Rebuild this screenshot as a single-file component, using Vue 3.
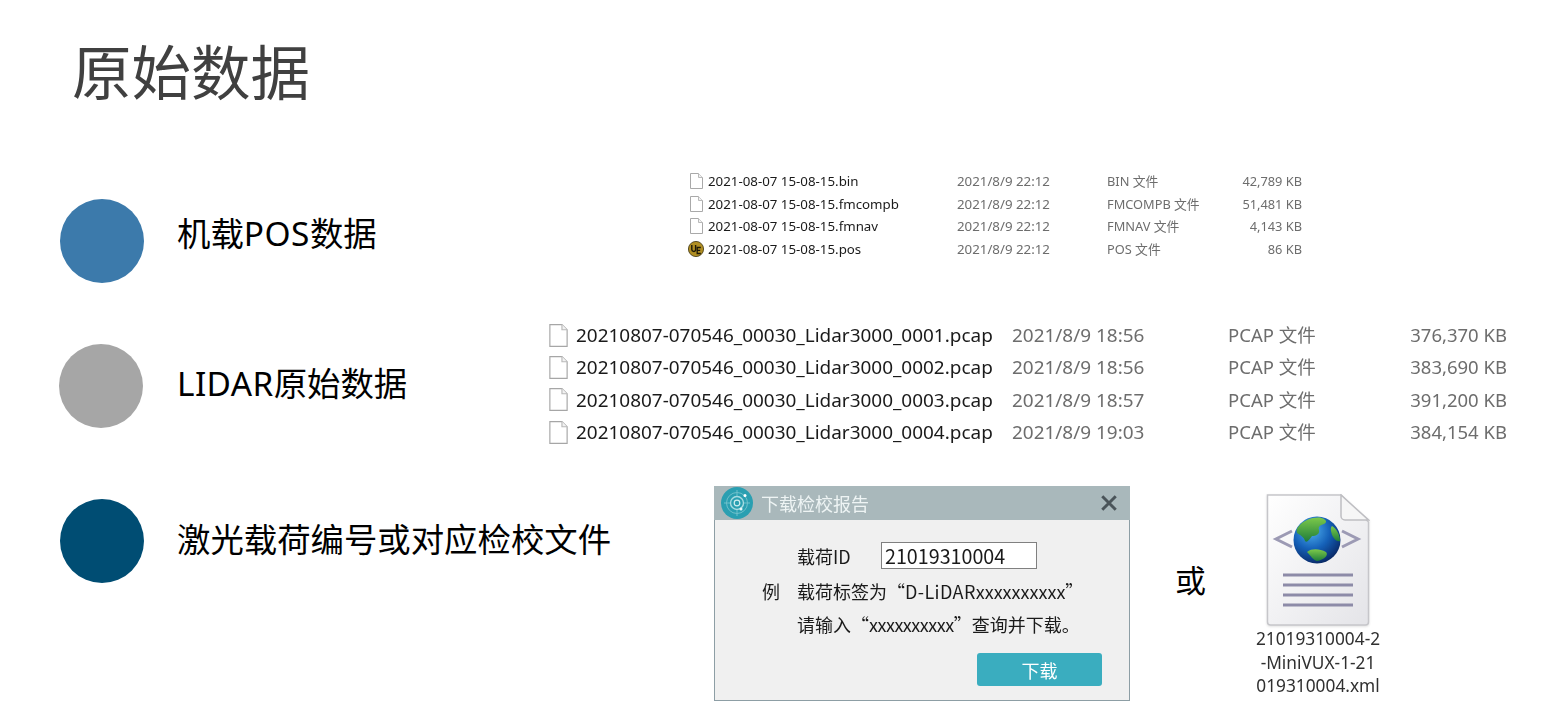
<script setup>
const posFiles = [
  { name: '2021-08-07 15-08-15.bin', date: '2021/8/9 22:12', type: 'BIN 文件', size: '42,789 KB' },
  { name: '2021-08-07 15-08-15.fmcompb', date: '2021/8/9 22:12', type: 'FMCOMPB 文件', size: '51,481 KB' },
  { name: '2021-08-07 15-08-15.fmnav', date: '2021/8/9 22:12', type: 'FMNAV 文件', size: '4,143 KB' },
  { name: '2021-08-07 15-08-15.pos', date: '2021/8/9 22:12', type: 'POS 文件', size: '86 KB', ue: true }
]
const pcapFiles = [
  { name: '20210807-070546_00030_Lidar3000_0001.pcap', date: '2021/8/9 18:56', type: 'PCAP 文件', size: '376,370 KB' },
  { name: '20210807-070546_00030_Lidar3000_0002.pcap', date: '2021/8/9 18:56', type: 'PCAP 文件', size: '383,690 KB' },
  { name: '20210807-070546_00030_Lidar3000_0003.pcap', date: '2021/8/9 18:57', type: 'PCAP 文件', size: '391,200 KB' },
  { name: '20210807-070546_00030_Lidar3000_0004.pcap', date: '2021/8/9 19:03', type: 'PCAP 文件', size: '384,154 KB' }
]
</script>

<template>
  <div class="page" lang="zh-CN">
    <h1 class="title">原始数据</h1>

    <section class="row row-pos">
      <div class="lead">
        <span class="dot dot-blue"></span>
        <span class="label">机载<span class="lat-pos">POS</span>数据</span>
      </div>
      <div class="files files-small">
        <div v-for="f in posFiles" :key="f.name" class="file">
          <svg v-if="f.ue" class="ficon" viewBox="0 0 16 16">
            <circle cx="8" cy="8" r="7.600" fill="#b08e22" stroke="#3c3310" stroke-width="0.800" />
            <path d="M3.800 4v4.500a2 2 0 0 0 3.800 .8V4" fill="none" stroke="#1c1808" stroke-width="1.400" />
            <path d="M12.800 6.500H9.200v6h3.600M9.200 9.400h3" fill="none" stroke="#1c1808" stroke-width="1.300" />
          </svg>
          <svg v-else class="ficon" viewBox="0 0 16 16">
            <path d="M2.500 .5H10.500L14.500 4.500V15.500H2.500Z" fill="#fff" stroke="#a9a9a9" />
            <path d="M10.500 .5V4.500H14.500" fill="#f2f2f2" stroke="#b9b9b9" />
          </svg>
          <span class="fname">{{ f.name }}</span>
          <span class="fdate">{{ f.date }}</span>
          <span class="fmeta">{{ f.type }}</span>
          <span class="fmeta fsize">{{ f.size }}</span>
        </div>
      </div>
    </section>

    <section class="row row-lidar">
      <div class="lead">
        <span class="dot dot-gray"></span>
        <span class="label"><span class="lat-lidar">LIDAR</span>原始数据</span>
      </div>
      <div class="files files-large">
        <div v-for="f in pcapFiles" :key="f.name" class="file">
          <svg class="ficon" viewBox="0 0 16 20">
            <path d="M.5 .5H11L15.500 5V19.500H.5Z" fill="#fff" stroke="#a6a6a6" />
            <path d="M11 .5V5H15.500" fill="#f2f2f2" stroke="#b9b9b9" />
          </svg>
          <span class="fname">{{ f.name }}</span>
          <span class="fdate">{{ f.date }}</span>
          <span class="fmeta">{{ f.type }}</span>
          <span class="fmeta fsize">{{ f.size }}</span>
        </div>
      </div>
    </section>

    <section class="row row-calib">
      <div class="lead">
        <span class="dot dot-navy"></span>
        <span class="label">激光载荷编号或对应检校文件</span>
      </div>

      <div class="dialog">
        <header class="dialog-bar">
          <svg class="logo" viewBox="0 0 32 32">
            <circle cx="16" cy="16" r="16" fill="#2a9fb1" />
            <circle cx="16" cy="16" r="10.500" fill="none" stroke="#6fc0cb" stroke-width="1" />
            <circle cx="16" cy="16" r="6.500" fill="none" stroke="#a7dbe1" stroke-width="1.400" />
            <circle cx="16" cy="16" r="2.800" fill="none" stroke="#cfeef0" stroke-width="1.200" />
            <path d="M16 3V9M16 23V29M3 16H9M23 16H29" stroke="#6fc0cb" stroke-width="1" />
            <circle cx="24" cy="8.500" r="1.500" fill="#fff" />
            <circle cx="20" cy="22" r="1.500" fill="#e5f7f8" />
          </svg>
          <span class="dialog-title">下载检校报告</span>
          <svg class="close" viewBox="0 0 16 16">
            <path d="M2 2L14 14M14 2L2 14" stroke="#4a5459" stroke-width="2.600" fill="none" />
          </svg>
        </header>
        <div class="dialog-body">
          <div class="line line-id">
            <span class="prefix"></span>
            <span class="id-label">载荷ID</span>
            <span class="id-input">21019310004</span>
          </div>
          <div class="line line-eg">
            <span class="prefix">例</span>
            <span>载荷标签为“<span class="lidar-id">D-LiDAR</span><span class="xs-wide">xxxxxxxxxx</span>”</span>
          </div>
          <div class="line line-in">
            <span class="prefix"></span>
            <span>请输入“<span class="xs">xxxxxxxxxx</span>”查询并下载。</span>
          </div>
          <button class="download" type="button">下载</button>
        </div>
      </div>

      <span class="or">或</span>

      <div class="xml">
        <svg class="xml-icon" viewBox="0 0 104 132">
          <defs>
            <linearGradient id="paper" x1="0" y1="0" x2="1" y2="1">
              <stop offset="0" stop-color="#ffffff" />
              <stop offset="1" stop-color="#e4e4e8" />
            </linearGradient>
            <radialGradient id="sea" cx="0.38" cy="0.3" r="0.78">
              <stop offset="0" stop-color="#4fb0f0" />
              <stop offset="0.5" stop-color="#1561b8" />
              <stop offset="0.85" stop-color="#0b3478" />
              <stop offset="1" stop-color="#071f52" />
            </radialGradient>
            <linearGradient id="land" x1="0" y1="0" x2="0" y2="1">
              <stop offset="0" stop-color="#7cc94a" />
              <stop offset="1" stop-color="#1f7d3a" />
            </linearGradient>
          </defs>
          <path d="M1.500 1H75L102.500 28V128a3 3 0 0 1-3 3H4.500a3 3 0 0 1-3-3Z" fill="url(#paper)" stroke="#c6c6ca" stroke-width="1.500" />
          <path d="M75 1V22a4 4 0 0 0 4 4H102.500Z" fill="#f6f6f6" stroke="#bebec2" stroke-width="1.500" />
          <path d="M26 37L10 45L26 53" fill="none" stroke="#9c9ab4" stroke-width="3" />
          <path d="M76 37L92 45L76 53" fill="none" stroke="#9c9ab4" stroke-width="3" />
          <circle cx="51" cy="46" r="23.500" fill="url(#sea)" />
          <path d="M33 32C38 26 46 23 54 23.500C60 25 62 28 58 30C54 31 52 33 53 36C54 40 50 42 46 42C43 46 41 49 39 47C38 43 34 41 31 39C30 36 31 34 33 32Z" fill="url(#land)" />
          <path d="M41 58C46 54 54 55 60 58C63 61 58 66 51 67C47 66 45 62 41 58Z" fill="url(#land)" />
          <path d="M66 32C71 35 74 41 74 47C71 48 68 45 66 41C65 37 64 34 66 32Z" fill="url(#land)" />
          <path d="M17 81H87M17 91H87M17 101H87M17 111H87" stroke="#8d8ba8" stroke-width="2.800" />
        </svg>
        <div class="xml-name">21019310004-2<br />-MiniVUX-1-21<br />019310004.xml</div>
      </div>
    </section>
  </div>
</template>

<style scoped>
.page {
  width: 1559px;
  height: 728px;
  overflow: hidden;
  background: #fff;
  font-family: "Noto Sans", "Noto Sans CJK SC", sans-serif;
  display: flex;
  flex-direction: column;
}
.title {
  margin: 0;
  height: 170px;
  padding: 25px 0 0 72px;
  box-sizing: border-box;
  font-size: 59.500px;
  line-height: 88px;
  font-weight: 400;
  color: #404040;
  font-family: "Noto Sans CJK SC", sans-serif;
}
.row { display: flex; align-items: flex-start; }
.row-pos { height: 150px; }
.row-lidar { height: 166px; }
.lead { display: flex; align-items: center; gap: 33px; width: 0; white-space: nowrap; flex: none; }
.row-pos .lead { margin: 29px 0 0 60px; }
.row-lidar .lead { margin: 24px 0 0 59px; }
.row-calib .lead { margin: 13px 0 0 60px; }
.dot { width: 84px; height: 84px; border-radius: 50%; flex: none; }
.dot-blue { background: #3c7aab; }
.dot-gray { background: #a6a6a6; }
.dot-navy { background: #004d73; }
.label {
  font-size: 33.400px;
  line-height: 44px;
  color: #000;
  font-family: "Noto Sans", "Noto Sans CJK SC", sans-serif;
}
.row-pos .label { margin-bottom: 16px; }
.row-lidar .label { margin-bottom: 6px; margin-left: 1px; }
.row-calib .label { margin-bottom: 4px; }
.lat-pos { letter-spacing: 0.500px; }
.lat-lidar { letter-spacing: 0.400px; }
.files { display: flex; flex-direction: column; filter: blur(0.300px); }
.file { display: grid; align-items: center; }
.ficon { display: block; }
.fname { color: #1a1a1a; white-space: nowrap; }
.fdate, .fmeta { color: #6d6d6d; white-space: nowrap; }
.fsize { text-align: right; }
.files-small { margin-left: 628px; line-height: 18px; }
.files-small .file {
  height: 22.600px;
  grid-template-columns: 20px 249px 150px 125px 70px;
}
.files-small .fname, .files-small .fdate { font-size: 13.300px; }
.files-small .fmeta { font-size: 12.800px; }
.files-small .ficon { width: 16px; height: 16px; }
.files-large { margin-left: 490px; line-height: 26px; margin-top: -1px; }
.files-large .file {
  height: 32.300px;
  grid-template-columns: 27px 436px 216px 120px 159px;
}
.files-large .fname, .files-large .fdate { font-size: 18.950px; }
.files-large .fmeta { font-size: 18.500px; }
.files-large .ficon { width: 19px; height: 23px; }
.dialog {
  margin-left: 654px;
  width: 416px;
  height: 215px;
  box-sizing: border-box;
  border: 1px solid #8d9ea5;
  border-top: 0;
  background: #f0f0f0;
  flex: none;
  font-family: "Noto Sans CJK SC", sans-serif;
  color: #1a1a1a;
  filter: blur(0.300px);
}
.dialog-bar {
  height: 34px;
  margin: 0 -1px;
  background: #a9b8bb;
  display: flex;
  align-items: center;
  padding: 0 12px 0 7px;
}
.logo { width: 32px; height: 32px; flex: none; }
.dialog-title { margin-left: 8px; font-size: 18px; color: #eef4f4; flex: 1; }
.close { width: 18px; height: 18px; }
.dialog-body { padding: 0 27px 0 47px; font-size: 18px; }
.line { display: flex; align-items: center; white-space: nowrap; line-height: 26px; }
.prefix { width: 35px; flex: none; }
.line-id { height: 27px; margin-top: 22px; }
.line-eg { height: 26px; margin-top: 9px; }
.line-in { height: 26px; margin-top: 7px; }
.id-label { width: 84px; flex: none; }
.id-input {
  width: 156px;
  height: 27px;
  box-sizing: border-box;
  border: 1px solid #808080;
  background: #fff;
  padding-left: 3px;
  font-size: 19.700px;
  line-height: 25px;
}
.lidar-id { letter-spacing: 0.400px; }
.xs-wide { letter-spacing: 0; }
.xs { letter-spacing: -0.500px; }
.download {
  display: block;
  margin: 16px 0 0 auto;
  width: 125px;
  height: 33px;
  padding: 0;
  border: 0;
  border-radius: 3px;
  background: #3aadbf;
  color: #fff;
  font: inherit;
  font-size: 18px;
}
.or {
  margin: 71px 0 0 45px;
  width: 32px;
  font-size: 31px;
  line-height: 44px;
  color: #000;
  font-family: "Noto Sans CJK SC", sans-serif;
  flex: none;
}
.xml { margin: 8px 0 0 48px; width: 126px; text-align: center; flex: none; }
.xml-icon { display: block; width: 104px; height: 132px; margin: 0 auto 0 11px; filter: drop-shadow(0 1px 1px rgba(0,0,0,.12)); }
.xml-name {
  margin-top: 1px;
  font-size: 17.300px;
  line-height: 23.500px;
  color: #303030;
  white-space: nowrap;
  filter: blur(0.300px);
}
</style>

<style>
html, body { background: #fff; }
</style>
